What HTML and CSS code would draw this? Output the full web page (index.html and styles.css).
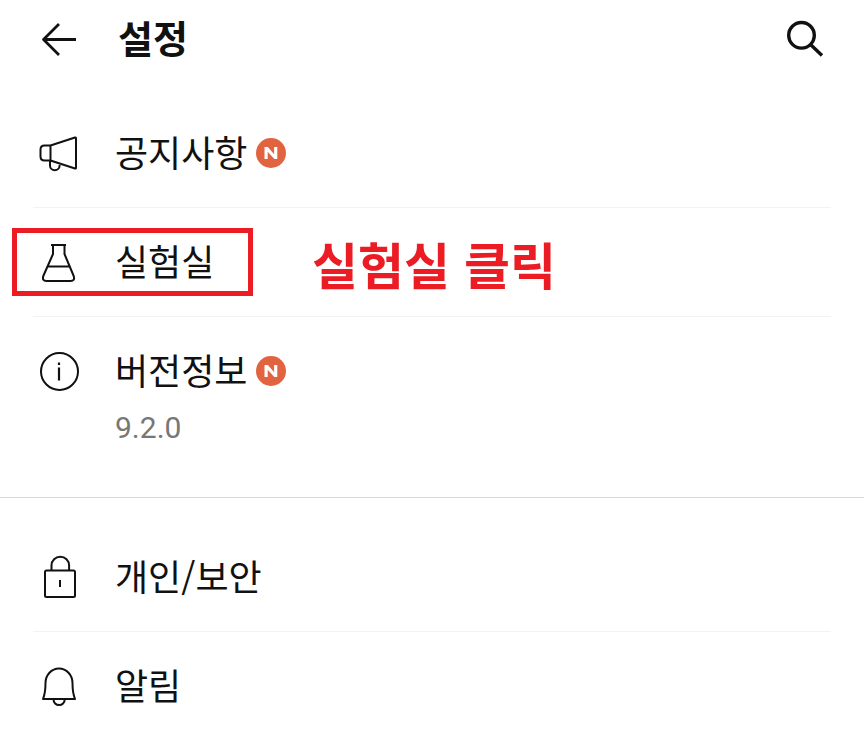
FILE: index.html
```html
<!DOCTYPE html>
<html lang="ko">
<head>
<meta charset="utf-8">
<meta name="viewport" content="width=device-width, initial-scale=1">
<title>설정</title>
<link rel="stylesheet" href="styles.css">
</head>
<body>
<header class="header">
  <button class="icon-button" type="button" aria-label="뒤로">
    <svg class="icon" viewBox="0 0 44 44" stroke-width="2.800"><path d="M40 22.500H7.500M23 7 7.500 22.500 23 38"/></svg>
  </button>
  <h1 class="title">설정</h1>
  <button class="icon-button" type="button" aria-label="검색">
    <svg class="icon" viewBox="0 0 44 44" stroke-width="3.400"><circle cx="17.500" cy="18.300" r="12.800"/><path d="M26.500 27.500 38 38.500"/></svg>
  </button>
</header>
<main>
  <ul class="section">
    <li class="item">
      <a class="row" href="#notice">
        <svg class="icon" viewBox="0 0 44 44" stroke-width="2"><path d="M14.500 14.500 39 6.500q1-.3 1 .8v29.400q0 1.100-1 .8L14.500 29.500H8.500q-4 0-4-4v-7q0-4 4-4zM14.500 14.500v15M14 29.500v5a4.800 4.800 0 0 0 9.600 0V32"/></svg>
        <span class="label">공지사항</span>
        <span class="badge"><svg class="badge-mark" viewBox="0 0 30 30"><path d="M8.500 21V9h3.400l6.200 7.200V9h3.200v12h-3L11.700 13.700V21z"/></svg></span>
      </a>
    </li>
    <li class="item marked">
      <a class="row" href="#lab">
        <svg class="icon" viewBox="0 0 44 44" stroke-width="2"><path d="M15 5h15M17 5v9L7.300 36q-1.500 5 3.200 5h24q4.700 0 3.200-5L28.500 14V5M12 26.500h21.500"/></svg>
        <span class="label">실험실</span>
      </a>
      <span class="highlight"></span>
      <strong class="note">실험실 클릭</strong>
    </li>
    <li class="item">
      <a class="row" href="#version">
        <svg class="icon" viewBox="0 0 44 44" stroke-width="2"><circle cx="23.500" cy="22.500" r="18.500"/><path stroke-width="2.200" d="M23 18.500v13M23 13.500v2.500"/></svg>
        <span class="label">버전정보</span>
        <span class="badge"><svg class="badge-mark" viewBox="0 0 30 30"><path d="M8.500 21V9h3.400l6.200 7.200V9h3.200v12h-3L11.700 13.700V21z"/></svg></span>
      </a>
      <p class="detail">9.2.0</p>
    </li>
  </ul>
  <ul class="section">
    <li class="item">
      <a class="row" href="#privacy">
        <svg class="icon" viewBox="0 0 44 44" stroke-width="2"><rect x="9" y="15.500" width="30" height="26.500" rx="1.500"/><path d="M15.500 15V10.500a8.800 8.800 0 0 1 17.600 0V15M24 25v7"/></svg>
        <span class="label">개인/보안</span>
      </a>
    </li>
    <li class="item">
      <a class="row" href="#alerts">
        <svg class="icon" viewBox="0 0 44 44" stroke-width="2"><path d="M7 35c2-5 2.500-8 2.500-16a13.500 14.500 0 0 1 27 0c0 8 .5 11 2.500 16zM17.500 35.500a5.600 5.600 0 0 0 11.200 0"/></svg>
        <span class="label">알림</span>
      </a>
    </li>
  </ul>
</main>
</body>
</html>
```
FILE: styles.css
```css
* {
  box-sizing: border-box;
}

body {
  margin: 0;
  background: #fff;
  color: #111;
  font-family: "Noto Sans CJK KR", "Noto Sans", sans-serif;
}

.header {
  display: flex;
  align-items: center;
  height: 78px;
  padding: 0 36px;
}

.icon-button {
  display: flex;
  padding: 0;
  border: 0;
  background: none;
  color: inherit;
}

.icon {
  flex: none;
  width: 44px;
  height: 44px;
  fill: none;
  stroke: currentColor;
  stroke-linejoin: round;
}

.title {
  flex: 1;
  margin: 0 0 0 38px;
  padding-bottom: 4px;
  font-size: 38px;
  font-weight: 700;
  line-height: 44px;
}

.section {
  margin: 0;
  padding: 21px 33px 0;
  list-style: none;
}

.section + .section {
  padding-top: 25px;
  border-top: 1px solid #d9d9d9;
}

.item {
  position: relative;
}

.item + .item {
  border-top: 1px solid #f3f3f3;
}

.row {
  display: flex;
  align-items: center;
  padding: 30px 3px;
  color: inherit;
  text-decoration: none;
}

.section + .section .item:last-child .row {
  padding-bottom: 26px;
}

.label {
  margin-left: 35px;
  padding-bottom: 4px;
  font-size: 36px;
  line-height: 44px;
}

.badge {
  display: flex;
  width: 30px;
  height: 30px;
  margin-left: 9px;
  border-radius: 50%;
  background: #e2633f;
}

.badge-mark {
  width: 30px;
  height: 30px;
  fill: #fff;
}

.detail {
  margin: -17px 0 0 82px;
  padding-bottom: 49px;
  color: #777;
  font-family: Roboto, sans-serif;
  font-size: 30px;
  line-height: 40px;
}

.highlight {
  position: absolute;
  top: 20px;
  left: -21px;
  width: 241px;
  height: 68px;
  border: 5px solid #ec1c24;
}

.note {
  position: absolute;
  top: 25px;
  left: 279px;
  color: #ec1c24;
  font-size: 50px;
  font-weight: 700;
  line-height: 60px;
  white-space: nowrap;
}
```
